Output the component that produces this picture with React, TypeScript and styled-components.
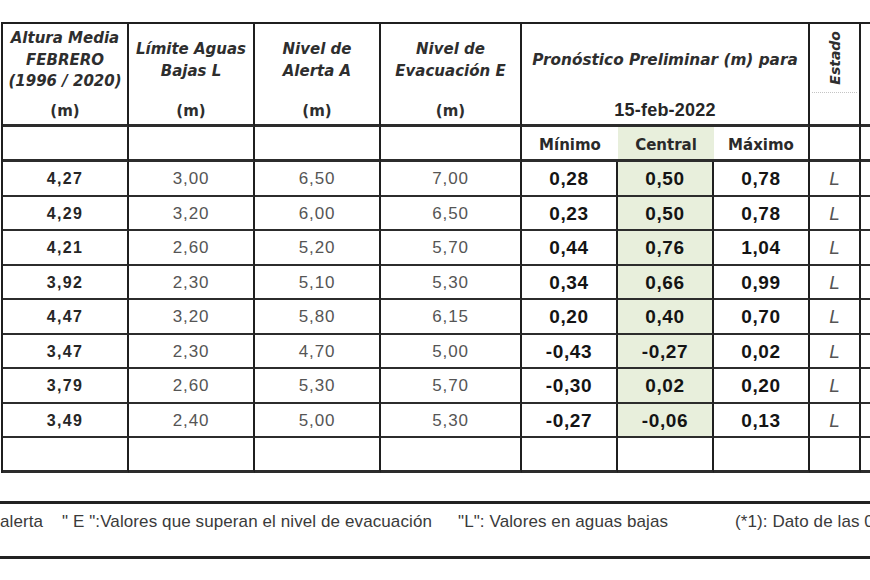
import React from "react";
import styled, { createGlobalStyle } from "styled-components";

const GlobalStyle = createGlobalStyle`
  html, body { margin: 0; padding: 0; background: #ffffff; overflow: hidden; }
  body { width: 870px; height: 580px; font-family: "Liberation Sans", Arial, sans-serif; }
`;

const LINE = "#1f1f1f";

const Page = styled.div`
  width: 870px;
  height: 580px;
  overflow: hidden;
  box-sizing: border-box;
  padding-top: 22px;
`;

const Table = styled.div`
  display: grid;
  grid-template-columns: 126px 126px 126px 141px 96px 96px 96px 51px 70px;
  grid-template-rows: 103px 35px repeat(9, 34.5px);
  width: max-content;
  margin-left: 1px;
  border-top: 2px solid ${LINE};
  border-left: 2px solid ${LINE};
`;

const Cell = styled.div<{ $green?: boolean; $open?: boolean; $heavy?: boolean }>`
  box-sizing: border-box;
  display: flex;
  align-items: center;
  justify-content: center;
  border-right: ${(p) => (p.$open ? "none" : `2px solid ${LINE}`)};
  border-bottom: ${(p) => (p.$heavy ? "3px" : "2px")} solid #2c2c2c;
  background: ${(p) => (p.$green ? "#e8efdc" : "#ffffff")};
`;

const HeadCell = styled(Cell)<{ $span?: number }>`
  flex-direction: column;
  align-items: stretch;
  justify-content: flex-start;
  grid-column: span ${(p) => p.$span ?? 1};
`;

const HeadTitle = styled.div<{ $rule?: boolean }>`
  box-sizing: border-box;
  height: 69px;
  padding-top: 4px;
  display: flex;
  flex-direction: column;
  align-items: center;
  justify-content: center;
  font-family: "DejaVu Sans", sans-serif;
  font-weight: bold;
  font-style: italic;
  font-size: 15px;
  line-height: 21.5px;
  color: #2e2e2e;
  text-align: center;
  white-space: nowrap;
  border-bottom: ${(p) => (p.$rule ? "1px dotted #c4c4c4" : "none")};
  margin: ${(p) => (p.$rule ? "0 2px" : "0")};
`;

const WideTitle = styled.span`
  font-size: 15.3px;
`;

const Vertical = styled.span`
  writing-mode: vertical-rl;
  transform: rotate(180deg);
  font-size: 14px;
  line-height: 16px;
  margin-top: -4px;
`;

const HeadUnit = styled.div`
  flex: 1;
  display: flex;
  align-items: center;
  justify-content: center;
  padding-top: 4px;
  font-family: "DejaVu Sans", sans-serif;
  font-weight: bold;
  font-size: 15px;
  color: #2e2e2e;
`;

const DateUnit = styled(HeadUnit)`
  font-family: "Liberation Sans", Arial, sans-serif;
  font-size: 18px;
  letter-spacing: 0.2px;
  color: #262626;
`;

const SubLabel = styled.span`
  font-family: "DejaVu Sans", sans-serif;
  font-weight: bold;
  font-size: 15px;
  color: #2a2a2a;
  padding-top: 3px;
`;

type Kind = "mean" | "level" | "forecast" | "state";

const Value = styled.span<{ $kind: Kind }>`
  font-family: "Liberation Sans", Arial, sans-serif;
  white-space: nowrap;
  padding-top: 2px;
  ${(p) =>
    p.$kind === "mean"
      ? "font-weight: bold; font-size: 16px; letter-spacing: 1.4px; color: #262626;"
      : p.$kind === "level"
      ? "font-weight: normal; font-size: 17px; letter-spacing: 0.9px; color: #555555;"
      : p.$kind === "forecast"
      ? "font-weight: bold; font-size: 19px; letter-spacing: 0.6px; color: #141414;"
      : "font-style: italic; font-size: 19px; color: #555555;"}
`;

const Legend = styled.div`
  margin-top: 28.5px;
  height: 58px;
  box-sizing: border-box;
  padding-top: 9px;
  border-top: 3px solid #222222;
  border-bottom: 3px solid #222222;
  display: grid;
  grid-template-columns: 62px 396px 277px 1fr;
  font-family: "Liberation Sans", Arial, sans-serif;
  font-size: 17px;
  line-height: 18px;
  letter-spacing: 0.1px;
  color: #3a3a3a;
  white-space: nowrap;
  overflow: hidden;
`;

const LegendItem = styled.span``;

type Row = { mean: string; low: string; alert: string; evac: string; min: string; mid: string; max: string };

const rows: Row[] = [
  { mean: "4,27", low: "3,00", alert: "6,50", evac: "7,00", min: "0,28", mid: "0,50", max: "0,78" },
  { mean: "4,29", low: "3,20", alert: "6,00", evac: "6,50", min: "0,23", mid: "0,50", max: "0,78" },
  { mean: "4,21", low: "2,60", alert: "5,20", evac: "5,70", min: "0,44", mid: "0,76", max: "1,04" },
  { mean: "3,92", low: "2,30", alert: "5,10", evac: "5,30", min: "0,34", mid: "0,66", max: "0,99" },
  { mean: "4,47", low: "3,20", alert: "5,80", evac: "6,15", min: "0,20", mid: "0,40", max: "0,70" },
  { mean: "3,47", low: "2,30", alert: "4,70", evac: "5,00", min: "-0,43", mid: "-0,27", max: "0,02" },
  { mean: "3,79", low: "2,60", alert: "5,30", evac: "5,70", min: "-0,30", mid: "0,02", max: "0,20" },
  { mean: "3,49", low: "2,40", alert: "5,00", evac: "5,30", min: "-0,27", mid: "-0,06", max: "0,13" },
];

const Titled = ({ lines, unit = "(m)" }: { lines: string[]; unit?: string }) => (
  <HeadCell $heavy>
    <HeadTitle>
      {lines.map((l) => (
        <span key={l}>{l}</span>
      ))}
    </HeadTitle>
    <HeadUnit>{unit}</HeadUnit>
  </HeadCell>
);

export default function App() {
  return (
    <Page>
      <GlobalStyle />
      <Table>
        <Titled lines={["Altura Media", "FEBRERO", "(1996 / 2020)"]} />
        <Titled lines={["Límite Aguas", "Bajas L"]} />
        <Titled lines={["Nivel de", "Alerta A"]} />
        <Titled lines={["Nivel de", "Evacuación E"]} />
        <HeadCell $heavy $span={3}>
          <HeadTitle>
            <WideTitle>Pronóstico Preliminar (m) para</WideTitle>
          </HeadTitle>
          <DateUnit>15-feb-2022</DateUnit>
        </HeadCell>
        <HeadCell $heavy>
          <HeadTitle $rule>
            <Vertical>Estado</Vertical>
          </HeadTitle>
        </HeadCell>
        <HeadCell $heavy />

        <Cell $heavy />
        <Cell $heavy />
        <Cell $heavy />
        <Cell $heavy />
        <Cell $heavy $open>
          <SubLabel>Mínimo</SubLabel>
        </Cell>
        <Cell $heavy $open $green>
          <SubLabel>Central</SubLabel>
        </Cell>
        <Cell $heavy>
          <SubLabel>Máximo</SubLabel>
        </Cell>
        <Cell $heavy />
        <Cell $heavy />

        {rows.map((r, i) => (
          <React.Fragment key={i}>
            <Cell>
              <Value $kind="mean">{r.mean}</Value>
            </Cell>
            <Cell>
              <Value $kind="level">{r.low}</Value>
            </Cell>
            <Cell>
              <Value $kind="level">{r.alert}</Value>
            </Cell>
            <Cell>
              <Value $kind="level">{r.evac}</Value>
            </Cell>
            <Cell>
              <Value $kind="forecast">{r.min}</Value>
            </Cell>
            <Cell $green>
              <Value $kind="forecast">{r.mid}</Value>
            </Cell>
            <Cell>
              <Value $kind="forecast">{r.max}</Value>
            </Cell>
            <Cell>
              <Value $kind="state">L</Value>
            </Cell>
            <Cell />
          </React.Fragment>
        ))}

        {Array.from({ length: 9 }).map((_, i) => (
          <Cell key={`e${i}`} $heavy />
        ))}
      </Table>
      <Legend>
        <LegendItem>alerta</LegendItem>
        <LegendItem>" E ":Valores que superan el nivel de evacuación</LegendItem>
        <LegendItem>"L": Valores en aguas bajas</LegendItem>
        <LegendItem>(*1): Dato de las 0</LegendItem>
      </Legend>
    </Page>
  );
}
